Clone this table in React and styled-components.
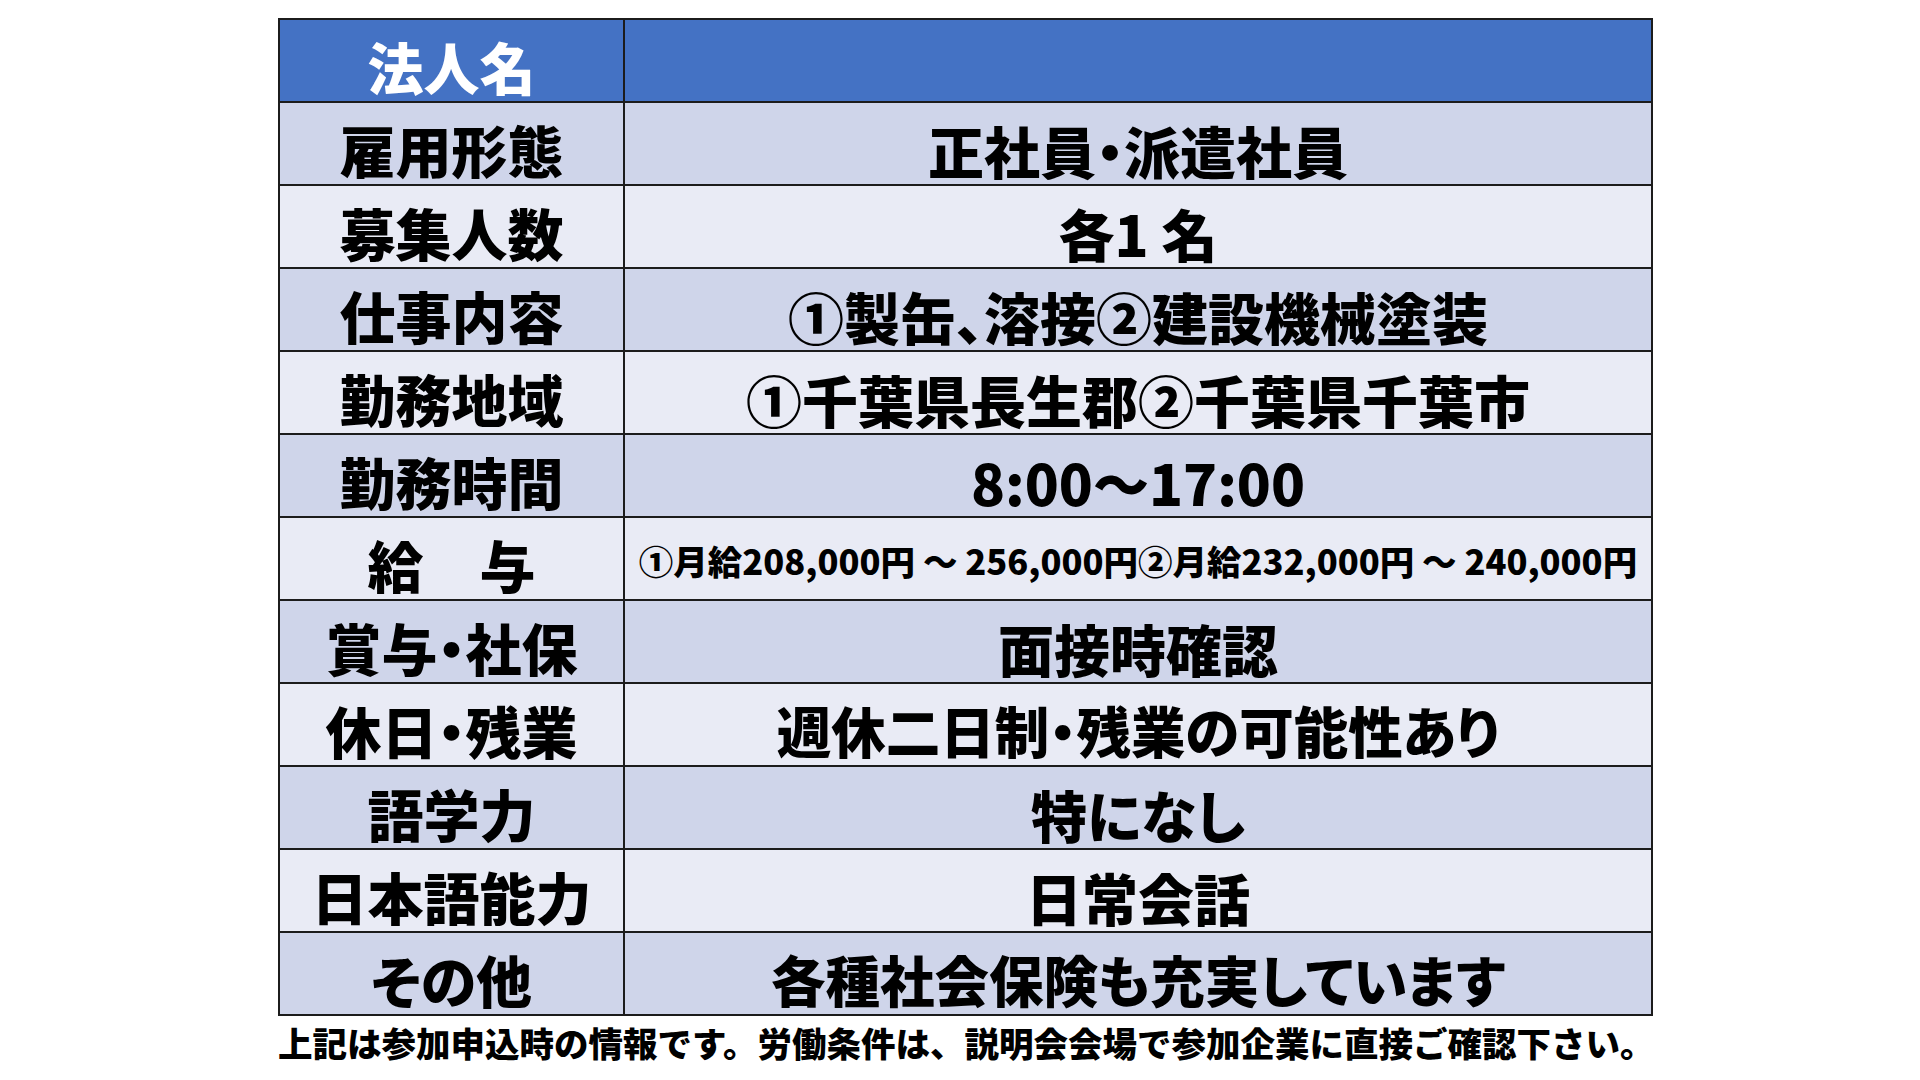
import React from "react";
import styled, { createGlobalStyle } from "styled-components";

const GlobalStyle = createGlobalStyle`
  html, body {
    margin: 0;
    padding: 0;
    background: #ffffff;
  }
  body {
    font-family: "Noto Sans CJK JP", "Noto Sans", sans-serif;
    color: #000000;
  }
`;

const rows = [
  { label: "雇用形態", value: "正社員・派遣社員" },
  { label: "募集人数", value: "各1 名" },
  { label: "仕事内容", value: "①製缶、溶接②建設機械塗装" },
  { label: "勤務地域", value: "①千葉県長生郡②千葉県千葉市" },
  { label: "勤務時間", value: "8:00～17:00" },
  {
    label: "給　与",
    value: "①月給208,000円 ～ 256,000円②月給232,000円 ～ 240,000円",
    small: true,
  },
  { label: "賞与・社保", value: "面接時確認" },
  { label: "休日・残業", value: "週休二日制・残業の可能性あり", kana: true },
  { label: "語学力", value: "特になし" },
  { label: "日本語能力", value: "日常会話" },
  { label: "その他", value: "各種社会保険も充実しています", kana: true },
];

const App = () => {
  return (
    <>
      <GlobalStyle />
      <Page>
        <Sheet>
          <tbody>
            <HeadRow>
              <LabelCell>法人名</LabelCell>
              <ValueCell />
            </HeadRow>
            {rows.map((r, i) => (
              <Row key={r.label} $even={i % 2 === 1}>
                <LabelCell>{r.label}</LabelCell>
                <ValueCell $small={r.small} $kana={r.kana}>
                  {r.value}
                </ValueCell>
              </Row>
            ))}
          </tbody>
        </Sheet>
        <Note>
          上記は参加申込時の情報です。労働条件は、説明会会場で参加企業に直接ご確認下さい。
        </Note>
      </Page>
    </>
  );
};

export default App;

const Page = styled.div`
  width: 1920px;
  height: 1080px;
  padding: 18px 0 0 278px;
  box-sizing: border-box;
`;

const Sheet = styled.table`
  width: 1375px;
  border-collapse: collapse;
  table-layout: fixed;
`;

const HeadRow = styled.tr`
  height: 83px;
  background: #4472c4;
  color: #ffffff;
`;

const Row = styled.tr`
  height: 83px;
  background: ${(p) => (p.$even ? "#e9ebf5" : "#cfd5ea")};
`;

const LabelCell = styled.td`
  width: 343px;
  border: 2px solid #1c1c1c;
  padding: 10px 0 0;
  text-align: center;
  font-size: 56px;
  font-weight: 900;
  line-height: 1;
  font-feature-settings: "palt";
  white-space: nowrap;
  vertical-align: middle;
`;

const ValueCell = styled.td`
  border: 2px solid #1c1c1c;
  padding: ${(p) => (p.$small ? "4px 0 0" : "12px 0 0")};
  text-align: center;
  font-size: ${(p) => (p.$small ? "34.5px" : p.$kana ? "54.5px" : "56px")};
  font-weight: 900;
  line-height: 1;
  font-feature-settings: "palt";
  white-space: nowrap;
  vertical-align: middle;
`;

const Note = styled.div`
  margin-top: 6px;
  font-size: 34.5px;
  font-weight: 900;
  line-height: 40px;
  white-space: nowrap;
`;
